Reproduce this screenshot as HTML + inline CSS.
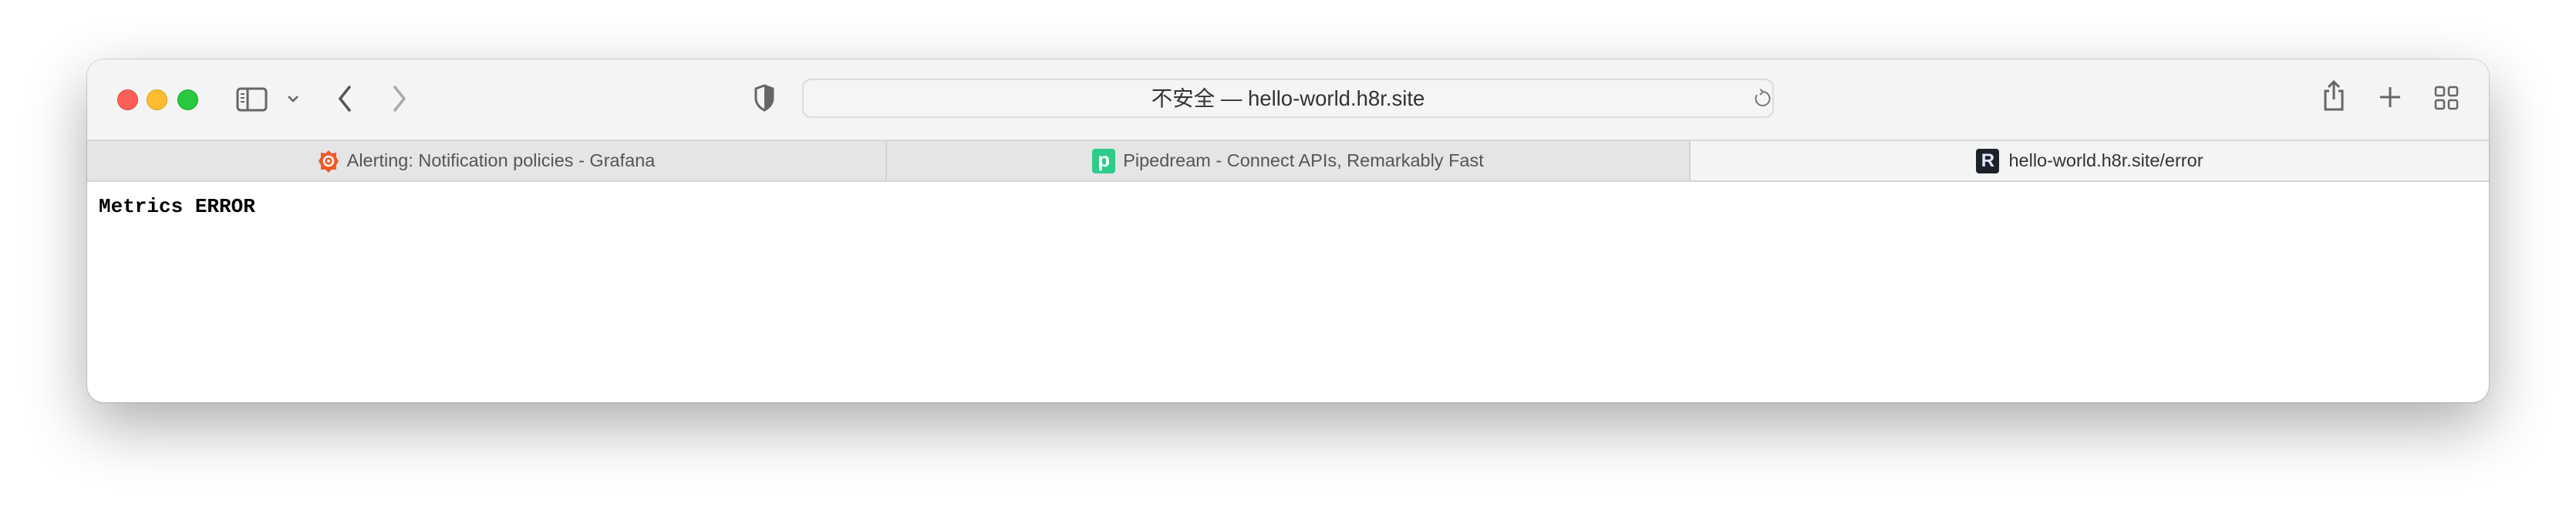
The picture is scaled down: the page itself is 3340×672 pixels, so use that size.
<!DOCTYPE html>
<html><head><meta charset="utf-8"><style>
html,body{margin:0;padding:0;width:3340px;height:672px;background:#fff;overflow:hidden;font-family:"Liberation Sans","Noto Sans CJK SC",sans-serif;}
.win{position:absolute;left:113px;top:77px;width:3114px;height:445px;border-radius:22px;overflow:hidden;background:#fff;box-shadow:0 30px 80px rgba(0,0,0,0.32),0 0 0 1px rgba(0,0,0,0.14);}
.tb{position:absolute;left:0;top:0;width:100%;height:104px;background:#f3f4f4;border-bottom:2px solid #d8d8d8;}
.tabs{position:absolute;left:0;top:106px;width:100%;height:51px;background:#e5e5e6;border-bottom:2px solid #d6d6d6;}
.tab{position:absolute;top:0;height:51px;display:flex;align-items:center;justify-content:center;font-size:23.5px;color:#555;}
.dot{position:absolute;top:116px;width:25px;height:25px;border-radius:50%;}
.url{position:absolute;left:927px;top:25px;width:1260px;height:51px;border:2px solid #dcdcdc;border-radius:12px;background:#f4f5f5;box-sizing:border-box;}
.urlt{position:absolute;left:0;right:0;top:0;height:47px;line-height:47px;text-align:center;font-size:27.5px;color:#333;}
svg{position:absolute;}
.content{position:absolute;left:15px;top:176px;font-family:"Liberation Mono",monospace;font-weight:bold;font-size:26px;color:#000;}
</style></head><body>
<div class="win">
 <div class="tb">
  <div class="dot" style="left:39px;top:39px;background:#fe5f57;border:1px solid #e14640;"></div>
  <div class="dot" style="left:77px;top:39px;background:#febc2e;border:1px solid #dfa023;"></div>
  <div class="dot" style="left:117px;top:39px;background:#28c840;border:1px solid #1aab29;"></div>
  <svg style="left:193px;top:36px" width="42" height="32" viewBox="0 0 42 32"><rect x="2" y="2" width="37" height="28" rx="4" fill="none" stroke="#666" stroke-width="3"/><line x1="15" y1="2" x2="15" y2="30" stroke="#666" stroke-width="3"/><line x1="6" y1="9" x2="11" y2="9" stroke="#666" stroke-width="2"/><line x1="6" y1="14" x2="11" y2="14" stroke="#666" stroke-width="2"/><line x1="6" y1="19" x2="11" y2="19" stroke="#666" stroke-width="2"/></svg>
  <svg style="left:258px;top:44px" width="18" height="14" viewBox="0 0 18 14"><path d="M3 4 L9 10 L15 4" fill="none" stroke="#666" stroke-width="2.5"/></svg>
  <svg style="left:322px;top:33px" width="24" height="36" viewBox="0 0 24 36"><path d="M18 3 L6 18 L18 33" fill="none" stroke="#555" stroke-width="3.5" stroke-linecap="round"/></svg>
  <svg style="left:393px;top:33px" width="24" height="36" viewBox="0 0 24 36"><path d="M6 3 L18 18 L6 33" fill="none" stroke="#aaa" stroke-width="3.5" stroke-linecap="round"/></svg>
  <svg style="left:864px;top:32px" width="28" height="36" viewBox="0 0 28 36"><path d="M14 2 L25 6 L25 18 Q25 28 14 34 Q3 28 3 18 L3 6 Z" fill="none" stroke="#666" stroke-width="3"/><path d="M14 2 L25 6 L25 18 Q25 28 14 34 Z" fill="#666"/></svg>
  <div class="url"><div class="urlt">不安全 — hello-world.h8r.site</div>
   <svg style="left:1230px;top:10px" width="24" height="28" viewBox="0 0 24 28"><path d="M14 5 A9 9 0 1 1 6 9" fill="none" stroke="#777" stroke-width="2"/><path d="M10 2 L14 5 L10 9" fill="none" stroke="#777" stroke-width="2"/></svg>
  </div>
  <svg style="left:2898px;top:26px" width="30" height="42" viewBox="0 0 30 42"><path d="M9 15 L4 15 L4 39 L26 39 L26 15 L21 15" fill="none" stroke="#666" stroke-width="3"/><path d="M15 3 L15 26 M8 10 L15 3 L22 10" fill="none" stroke="#666" stroke-width="3"/></svg>
  <svg style="left:2971px;top:34px" width="30" height="30" viewBox="0 0 30 30"><path d="M15 2 V28 M2 15 H28" stroke="#666" stroke-width="3"/></svg>
  <svg style="left:3043px;top:34px" width="32" height="32" viewBox="0 0 32 32"><rect x="2" y="2" width="11" height="11" rx="2" fill="none" stroke="#666" stroke-width="2.5"/><rect x="19" y="2" width="11" height="11" rx="2" fill="none" stroke="#666" stroke-width="2.5"/><rect x="2" y="19" width="11" height="11" rx="2" fill="none" stroke="#666" stroke-width="2.5"/><rect x="19" y="19" width="11" height="11" rx="2" fill="none" stroke="#666" stroke-width="2.5"/></svg>
 </div>
 <div class="tabs">
  <div class="tab" style="left:0;width:1035px;border-right:2px solid #d3d3d3;"><svg style="position:static;margin-right:10px" width="28" height="32" viewBox="0 0 28 32"><path d="M14 2 L18 6 L24 5 L24 11 L27 16 L24 21 L24 27 L18 27 L14 31 L10 27 L4 27 L4 21 L1 16 L4 11 L4 5 L10 6 Z" fill="#f05a28"/><circle cx="14" cy="16" r="6" fill="none" stroke="#fff" stroke-width="2.5"/><circle cx="14" cy="16" r="2" fill="#fff"/></svg>Alerting: Notification policies - Grafana</div>
  <div class="tab" style="left:1037px;width:1040px;border-right:2px solid #d3d3d3;"><span style="display:inline-block;width:30px;height:32px;background:#2ecc8a;border-radius:4px;color:#fff;font-weight:bold;font-size:26px;line-height:28px;text-align:center;margin-right:10px">p</span>Pipedream - Connect APIs, Remarkably Fast</div>
  <div class="tab" style="left:2079px;width:1035px;background:#f3f4f4;height:51px;color:#333"><span style="display:inline-block;width:30px;height:32px;background:#1d2228;border-radius:4px;color:#dde8ff;font-weight:bold;font-size:24px;line-height:32px;text-align:center;margin-right:12px">R</span>hello-world.h8r.site/error</div>
 </div>
 <div class="content">Metrics ERROR</div>
</div>
</body></html>
